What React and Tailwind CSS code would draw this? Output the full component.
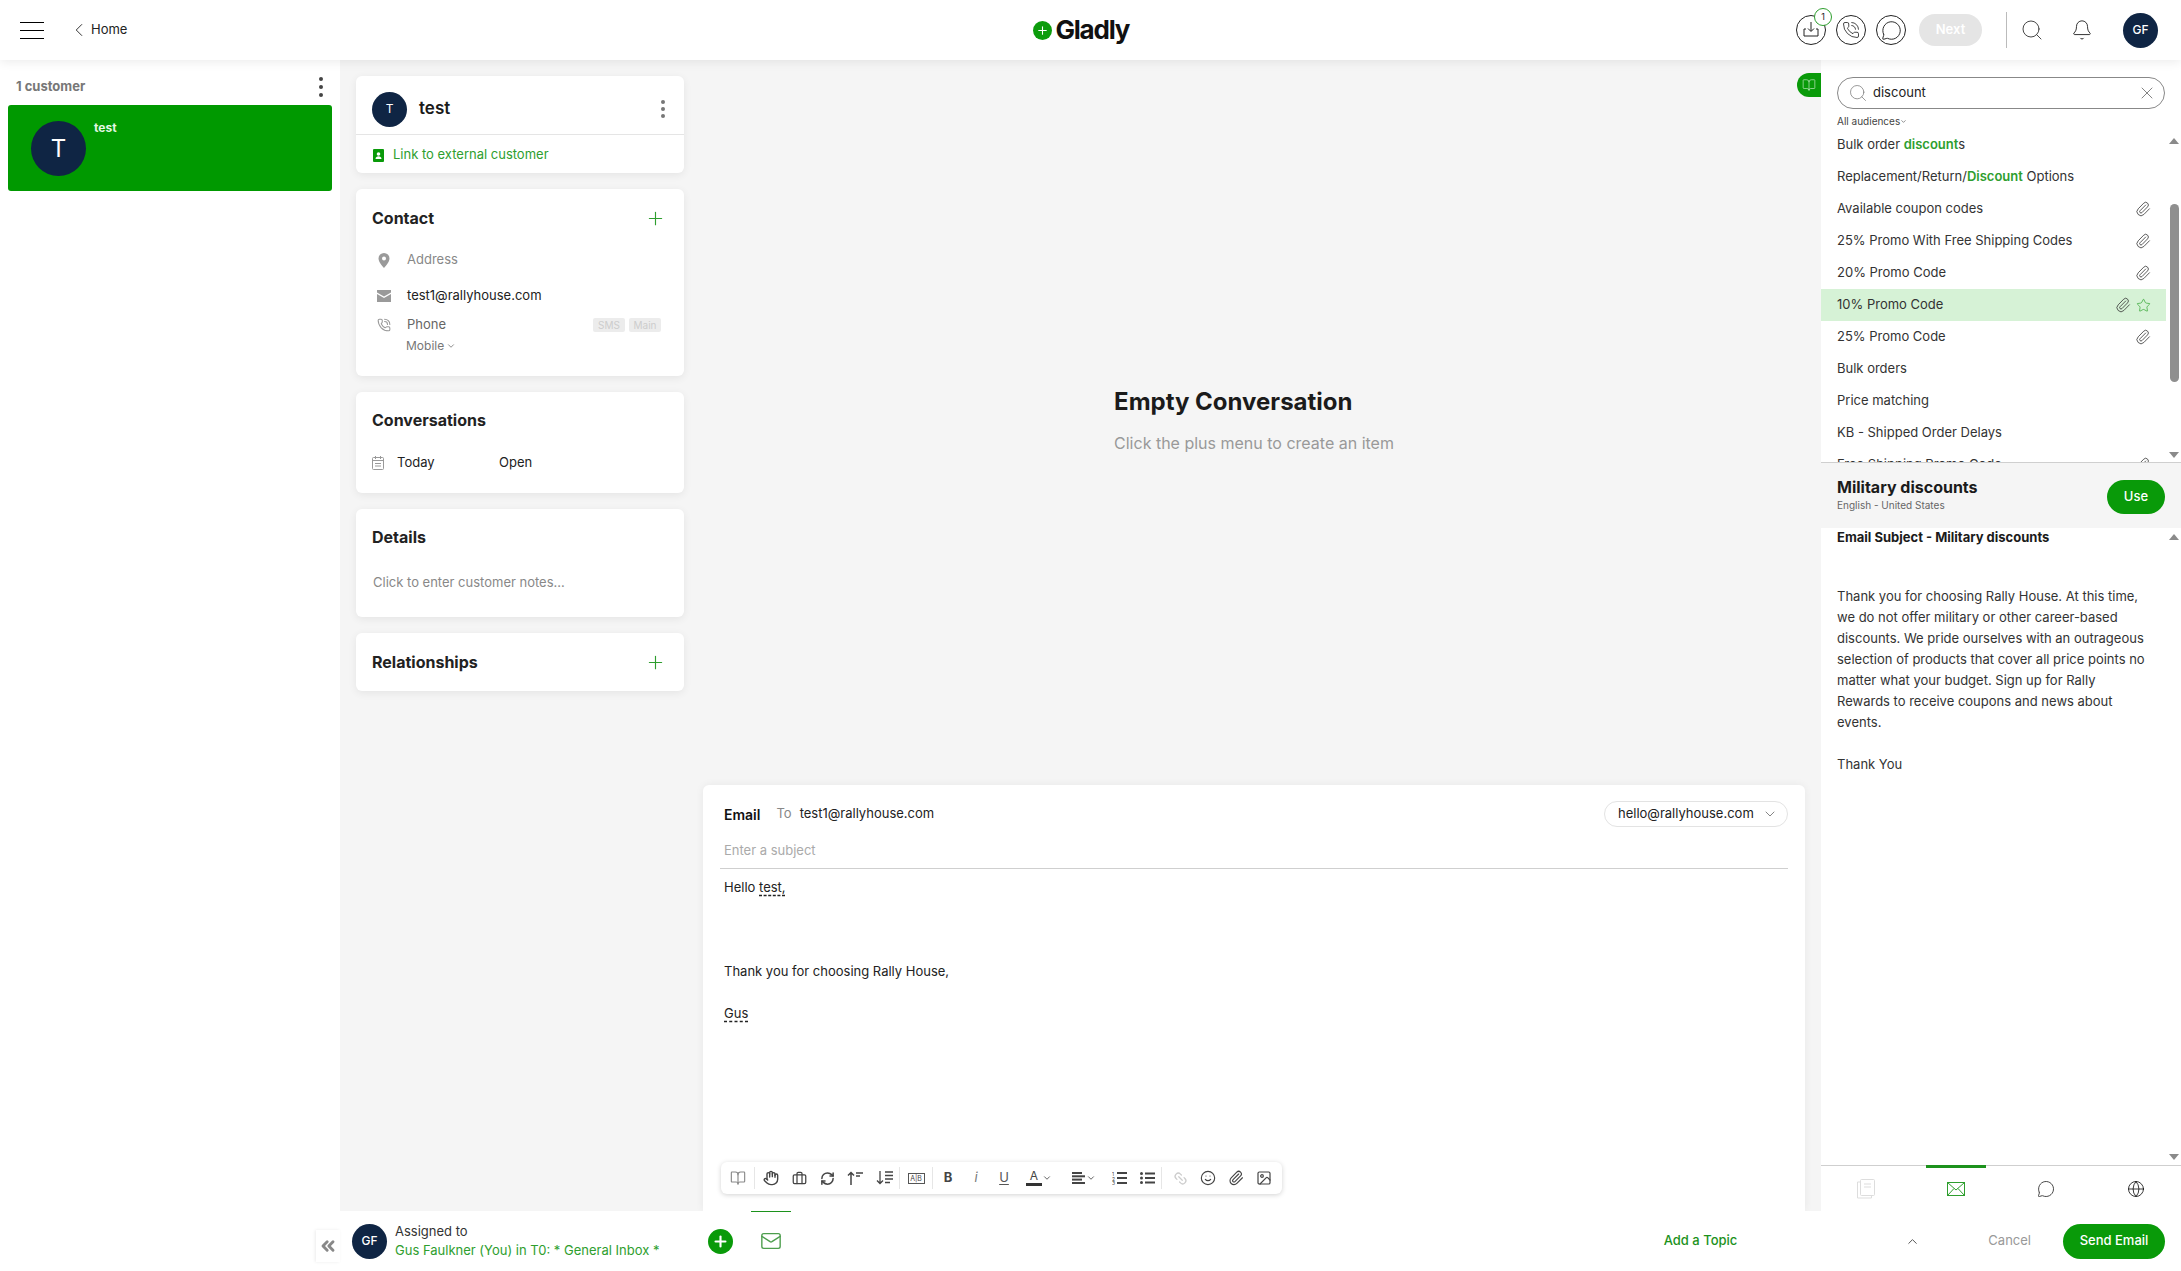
import React from "react";
import {
  Bell,
  BookOpen,
  Briefcase,
  ChevronDown,
  ChevronLeft,
  ChevronUp,
  ChevronsLeft,
  Globe,
  Hand,
  ImageIcon,
  Link2,
  Mail,
  MessageCircle,
  Paperclip,
  PhoneCall,
  Plus,
  RefreshCw,
  Search,
  Smile,
  Star,
  X,
} from "lucide-react";

const articles = [
  { title: <>Bulk order <b className="font-semibold text-[#2e9e2e]">discount</b>s</> },
  { title: <>Replacement/Return/<b className="font-semibold text-[#2e9e2e]">Discount</b> Options</> },
  { title: "Available coupon codes", clip: true },
  { title: "25% Promo With Free Shipping Codes", clip: true },
  { title: "20% Promo Code", clip: true },
  { title: "10% Promo Code", clip: true, active: true },
  { title: "25% Promo Code", clip: true },
  { title: "Bulk orders" },
  { title: "Price matching" },
  { title: "KB - Shipped Order Delays" },
  { title: "Free Shipping Promo Code", clip: true },
];

function Avatar({ text, className }) {
  return (
    <div className={`flex shrink-0 items-center justify-center rounded-full bg-[#0f2544] text-white ${className}`}>
      {text}
    </div>
  );
}

function Dots({ className }) {
  return (
    <div className={`flex flex-col items-center ${className}`}>
      <span className="size-[4px] rounded-full bg-current" />
      <span className="size-[4px] rounded-full bg-current" />
      <span className="size-[4px] rounded-full bg-current" />
    </div>
  );
}

function Card({ className, children }) {
  return <div className={`rounded-[6px] bg-white shadow-[0_2px_8px_rgba(0,0,0,0.07)] ${className}`}>{children}</div>;
}

function CircleButton({ children }) {
  return (
    <div className="flex size-[30px] items-center justify-center rounded-full border border-[#222] text-[#222]">
      {children}
    </div>
  );
}

function ScrollArrow({ up }) {
  return (
    <div className={`h-0 w-0 border-x-[5px] border-x-transparent ${up ? "border-b-[6px] border-b-[#8a8a8a]" : "border-t-[6px] border-t-[#8a8a8a]"}`} />
  );
}

function ToolButton({ className = "", children }) {
  return <div className={`flex h-full w-[28px] shrink-0 items-center justify-center text-[#444] ${className}`}>{children}</div>;
}

function ToolSep() {
  return <div className="h-[22px] w-px shrink-0 bg-[#e6e6e6]" />;
}

function Toolbar() {
  const ico = { size: 16, strokeWidth: 1.7 };
  return (
    <div className="flex h-[32px] w-[561px] items-center rounded-[6px] bg-white shadow-[0_1px_5px_rgba(0,0,0,0.18)]">
      <ToolButton className="w-[33px] text-[#888]"><BookOpen {...ico} /></ToolButton>
      <ToolSep />
      <ToolButton className="ml-[2px]"><Hand size={16} strokeWidth={2.1} /></ToolButton>
      <ToolButton><Briefcase size={15} strokeWidth={2} /></ToolButton>
      <ToolButton><RefreshCw size={15} strokeWidth={2.4} /></ToolButton>
      <ToolButton className="w-[29px]">
        <svg width="17" height="14" viewBox="0 0 17 14" fill="none" stroke="currentColor" strokeWidth="1.5">
          <path d="M4 14V1.500M1 4.500l3-3 3 3M9 2h7M9 5h4" />
        </svg>
      </ToolButton>
      <ToolButton className="w-[29px]">
        <svg width="17" height="14" viewBox="0 0 17 14" fill="none" stroke="currentColor" strokeWidth="1.3">
          <path d="M4 0v12.500M1 9.500l3 3 3-3M9 1h8M9 4.500h8M9 8h8M9 11.500h5" />
        </svg>
      </ToolButton>
      <ToolSep />
      <ToolButton className="w-[32px]">
        <span className="flex h-[11px] w-[17px] items-center justify-center border border-[#555] text-[7px] leading-none">A|B</span>
      </ToolButton>
      <ToolSep />
      <ToolButton className="ml-[1px]"><span className="text-[13px] font-bold">B</span></ToolButton>
      <ToolButton><span className="text-[13px] italic text-[#777]">i</span></ToolButton>
      <ToolButton><span className="text-[13px] text-[#555] underline underline-offset-2">U</span></ToolButton>
      <ToolButton className="w-[42px]">
        <span className="flex flex-col items-center text-[12px] leading-[12px]">
          A
          <span className="mt-[1px] h-[3px] w-[16px] bg-[#333]" />
        </span>
        <ChevronDown size={10} />
      </ToolButton>
      <ToolButton className="ml-[3px] w-[42px]">
        <svg width="14" height="12" viewBox="0 0 14 12" fill="currentColor">
          <rect width="10" height="2" />
          <rect y="3.3" width="13" height="2" />
          <rect y="6.6" width="10" height="2" />
          <rect y="10" width="13" height="2" />
        </svg>
        <ChevronDown size={10} />
      </ToolButton>
      <ToolButton>
        <svg width="15" height="14" viewBox="0 0 15 14" fill="currentColor">
          <text x="0" y="4.5" fontSize="5">1</text>
          <text x="0" y="9.5" fontSize="5">2</text>
          <text x="0" y="14" fontSize="5">3</text>
          <rect x="5" y="1" width="10" height="2" />
          <rect x="5" y="6" width="10" height="2" />
          <rect x="5" y="11" width="10" height="2" />
        </svg>
      </ToolButton>
      <ToolButton>
        <svg width="15" height="12" viewBox="0 0 15 12" fill="currentColor">
          <circle cx="1.5" cy="1.5" r="1.5" />
          <circle cx="1.5" cy="6" r="1.5" />
          <circle cx="1.5" cy="10.5" r="1.5" />
          <rect x="5" y="0.5" width="10" height="2" />
          <rect x="5" y="5" width="10" height="2" />
          <rect x="5" y="9.5" width="10" height="2" />
        </svg>
      </ToolButton>
      <ToolSep />
      <ToolButton className="ml-[4px] text-[#ccc]"><Link2 size={15} strokeWidth={2} className="rotate-45" /></ToolButton>
      <ToolButton><Smile {...ico} /></ToolButton>
      <ToolButton><Paperclip {...ico} /></ToolButton>
      <ToolButton>
        <ImageIcon size={16} strokeWidth={1.8} />
      </ToolButton>
    </div>
  );
}

function CustomerColumn() {
  return (
    <div className="flex w-[363px] shrink-0 flex-col gap-[16px] pl-[16px] pr-[19px] pt-[16px]">
      <Card className="h-[97px]">
        <div className="flex h-[59px] items-center border-b border-[#e5e5e5] px-[16px] pt-[8px]">
          <Avatar text="T" className="size-[35px] text-[12px]" />
          <span className="ml-[12px] text-[17px] font-semibold text-[#1b1b1b]">test</span>
          <Dots className="ml-auto mr-[3px] gap-[3px] text-[#777]" />
        </div>
        <div className="flex h-[38px] items-center px-[17px] pt-[2px] text-[13px] text-[#2e9e2e]">
          <svg width="12" height="13" viewBox="0 0 12 13" fill="#099a09">
            <path d="M1 0h9a1 1 0 0 1 1 1v11a1 1 0 0 1-1 1H1a1 1 0 0 1-1-1V1a1 1 0 0 1 1-1z" />
            <circle cx="5.500" cy="5" r="1.800" fill="#fff" />
            <path d="M2.500 10c0-2 1.500-2.800 3-2.800s3 .8 3 2.800z" fill="#fff" />
          </svg>
          <span className="ml-[8px]">Link to external customer</span>
        </div>
      </Card>

      <Card className="h-[187px] px-[16px] pt-[19px]">
        <div className="flex h-[20px] items-center justify-between">
          <span className="text-[16px] font-bold text-[#222]">Contact</span>
          <Plus size={21} strokeWidth={1.3} className="mr-[2px] text-[#2e9e2e]" />
        </div>
        <div className="mt-[22px] flex h-[20px] items-center text-[13px] text-[#888]">
          <svg width="35" height="15" viewBox="0 0 35 15" fill="#9a9a9a">
            <path d="M12 0a5.500 5.500 0 0 0-5.500 5.500C6.500 9.500 12 15 12 15s5.500-5.500 5.500-9.500A5.500 5.500 0 0 0 12 0zm0 7.500a2 2 0 1 1 0-4 2 2 0 0 1 0 4z" />
          </svg>
          Address
        </div>
        <div className="mt-[16px] flex h-[20px] items-center text-[13px] text-[#222]">
          <svg width="35" height="12" viewBox="0 0 35 12" fill="#9a9a9a">
            <path d="M5 0h14v2.500l-7 4-7-4z" />
            <path d="M5 4l7 4 7-4v8H5z" />
          </svg>
          test1@rallyhouse.com
        </div>
        <div className="mt-[9px] flex h-[20px] items-center text-[13px] text-[#666]">
          <PhoneCall size={14} strokeWidth={1.8} className="ml-[5px] mr-[16px] text-[#999]" />
          Phone
          <span className="ml-auto flex h-[14px] w-[32px] items-center justify-center rounded-[2px] bg-[#ececec] text-[10px] text-[#ccc]">SMS</span>
          <span className="ml-[4px] mr-[7px] flex h-[14px] w-[32px] items-center justify-center rounded-[2px] bg-[#ececec] text-[10px] text-[#ccc]">Main</span>
        </div>
        <div className="ml-[34px] mt-[2px] flex items-center gap-[2px] text-[12px] leading-[18px] text-[#777]">
          Mobile <ChevronDown size={10} />
        </div>
      </Card>

      <Card className="h-[101px] px-[16px] pt-[18px]">
        <div className="text-[16px] font-bold leading-[20px] text-[#222]">Conversations</div>
        <div className="mt-[23px] flex h-[20px] items-center text-[13px] text-[#222]">
          <svg width="25" height="14" viewBox="0 0 25 14" fill="none" stroke="#999">
            <rect x="0.500" y="1.500" width="11" height="12" rx="1" />
            <path d="M0.500 4.500h11M3.500 0v3M8.500 0v3M3 7.500h6M3 10h6" />
          </svg>
          <span className="w-[102px]">Today</span>
          Open
        </div>
      </Card>

      <Card className="h-[108px] px-[16px] pt-[18px]">
        <div className="text-[16px] font-bold leading-[20px] text-[#222]">Details</div>
        <div className="ml-[1px] mt-[25px] text-[13px] leading-[20px] text-[#888]">Click to enter customer notes...</div>
      </Card>

      <Card className="flex h-[58px] items-center justify-between px-[16px]">
        <span className="text-[16px] font-bold text-[#222]">Relationships</span>
        <Plus size={21} strokeWidth={1.3} className="mr-[2px] text-[#2e9e2e]" />
      </Card>
    </div>
  );
}

function Compose() {
  return (
    <div className="flex h-[426px] flex-col rounded-t-[6px] bg-white pb-[17px] shadow-[0_0_8px_rgba(0,0,0,0.06)]">
      <div className="flex items-center pl-[21px] pr-[20px] pt-[16px] text-[13px]">
        <span className="text-[14px] font-semibold text-[#111]">Email</span>
        <span className="ml-[16px] text-[#888]">To</span>
        <span className="ml-[8px] text-[#222]">test1@rallyhouse.com</span>
        <span className="ml-auto mr-[-3px] flex h-[26px] w-[184px] items-center justify-between rounded-full border border-[#e3e3e3] pl-[13px] pr-[9px] text-[#222]">
          hello@rallyhouse.com <ChevronDown size={16} strokeWidth={1.2} className="text-[#666]" />
        </span>
      </div>
      <div className="mx-[17px] mt-[14px] border-b border-[#cfcfcf] pb-[9px] pl-[4px] pr-[3px] text-[13px] leading-[18px] text-[#aaa]">
        Enter a subject
      </div>
      <div className="mt-[8px] pl-[21px] pr-[20px] text-[13px] leading-[21px] text-[#222]">
        <p>Hello <span className="underline decoration-dashed underline-offset-[3px]">test,</span></p>
        <p className="mt-[63px]">Thank you for choosing Rally House,</p>
        <p className="mt-[21px]"><span className="underline decoration-dashed underline-offset-[3px]">Gus</span></p>
      </div>
      <div className="mt-auto pl-[18px]">
        <Toolbar />
      </div>
    </div>
  );
}

function ArticlePanel() {
  return (
    <div className="flex w-[360px] shrink-0 flex-col bg-white">
      <div className="px-[16px] pt-[17px]">
        <div className="flex h-[32px] items-center rounded-full border border-[#888] pl-[10px] pr-[7px] text-[13px] text-[#222]">
          <Search size={20} strokeWidth={0.9} className="text-[#777]" />
          <span className="ml-[5px]">discount</span>
          <X size={20} strokeWidth={0.8} className="ml-auto text-[#444]" />
        </div>
        <div className="mt-[5px] flex h-[14px] items-center text-[10px] text-[#444]">
          All audiences<ChevronDown size={7} />
        </div>
      </div>
      <div className="mt-[4px] flex h-[331px] border-b border-[#cfcfcf]">
        <div className="w-[345px] overflow-hidden">
          {articles.map((a, i) => (
            <div
              key={i}
              className={`flex h-[32px] items-center pl-[16px] pr-[15px] text-[13px] text-[#333] first:mt-[-3px] ${a.active ? "bg-[#d6f2d6]" : ""}`}
            >
              <span>{a.title}</span>
              {a.clip && <Paperclip size={16} strokeWidth={1.2} className="ml-auto" />}
              {a.active && <Star size={15} strokeWidth={1} className="ml-[5px] text-[#1a9a1a]" />}
            </div>
          ))}
        </div>
        <div className="flex w-[15px] flex-col items-center justify-between pb-[4px] pl-[1px] pt-[6px]">
          <ScrollArrow up />
          <div className="mb-auto mt-[60px] h-[178px] w-[9px] rounded-full bg-[#8f8f8f]" />
          <ScrollArrow />
        </div>
      </div>
      <div className="flex h-[65px] items-center bg-[#f5f5f5] pl-[16px] pr-[16px]">
        <div className="mb-[4px]">
          <div className="text-[16px] font-bold leading-[22px] text-[#1b1b1b]">Military discounts</div>
          <div className="text-[10px] leading-[14px] text-[#666]">English - United States</div>
        </div>
        <div className="ml-auto mt-[2px] flex h-[34px] w-[58px] items-center justify-center rounded-full bg-[#099a09] text-[13px] font-medium text-white">Use</div>
      </div>
      <div className="flex flex-1">
        <div className="w-[345px] pl-[16px] text-[13px] leading-[21px] text-[#333]">
          <p className="font-bold leading-[18px] text-[#1b1b1b]">Email Subject - Military discounts</p>
          <p className="mt-[40px] w-[312px]">
            Thank you for choosing Rally House. At this time, we do not offer military or other career-based discounts. We pride ourselves with an outrageous selection of products that cover all price points no matter what your budget. Sign up for Rally Rewards to receive coupons and news about events.
          </p>
          <p className="mt-[21px]">Thank You</p>
        </div>
        <div className="flex w-[15px] flex-col items-center justify-between pb-[5px] pl-[1px] pt-[6px]">
          <ScrollArrow up />
          <ScrollArrow />
        </div>
      </div>
      <div className="grid h-[46px] grid-cols-4 border-t border-[#cfcfcf]">
        <div className="flex items-center justify-center text-[#ddd]">
          <svg width="18" height="20" viewBox="0 0 18 20" fill="none" stroke="currentColor">
            <rect x="3.500" y="0.500" width="14" height="16" rx="1" />
            <path d="M3.500 3h-3v16h14v-2.500M7 5h7M7 8h7" />
          </svg>
        </div>
        <div className="relative flex items-center justify-center text-[#2e9e2e]">
          <span className="absolute left-[15px] top-[-1px] h-[3px] w-[60px] bg-[#1c921c]" />
          <svg width="18" height="14" viewBox="0 0 18 14" fill="none" stroke="currentColor">
            <rect x="0.500" y="0.500" width="17" height="13" />
            <path d="M0.500 0.500l8.500 7.500 8.500-7.500M0.500 13.500l6.500-7M17.500 13.500l-6.500-7" />
          </svg>
        </div>
        <div className="flex items-center justify-center text-[#222]"><MessageCircle size={18} strokeWidth={1.1} /></div>
        <div className="flex items-center justify-center text-[#111]"><Globe size={18} strokeWidth={1.1} /></div>
      </div>
    </div>
  );
}

export default function App() {
  return (
    <div className="flex h-screen flex-col overflow-hidden bg-white font-['Inter',sans-serif]">
      <header className="relative z-10 flex h-[60px] shrink-0 items-center bg-white pl-[20px] pr-[23px] shadow-[0_2px_10px_rgba(0,0,0,0.08)]">
        <div className="flex w-[24px] flex-col gap-[7px]">
          <span className="h-px bg-black" />
          <span className="h-px bg-black" />
          <span className="h-px bg-black" />
        </div>
        <ChevronLeft size={22} strokeWidth={1} className="ml-[24px] text-[#222]" />
        <span className="ml-[1px] text-[13px] text-[#222]">Home</span>
        <div className="ml-[906px] flex items-center">
          <div className="flex size-[19px] items-center justify-center rounded-full bg-[#0c9c0c]">
            <Plus size={13} strokeWidth={2} className="text-white" />
          </div>
          <span className="ml-[3px] text-[26px] font-bold leading-none tracking-[-1.2px] text-[#111]">Gladly</span>
        </div>
        <div className="ml-auto flex items-center">
          <div className="relative">
            <CircleButton>
              <svg width="18" height="18" viewBox="0 0 18 18" fill="none" stroke="currentColor">
                <path d="M9 1v9M6 7.500l3 3 3-3M4 8H2v7h14V8h-2" />
              </svg>
            </CircleButton>
            <span className="absolute right-[-6px] top-[-7px] flex size-[18px] items-center justify-center rounded-full border border-[#2e9e2e] bg-white text-[9px] text-[#222]">1</span>
          </div>
          <div className="ml-[10px]"><CircleButton><PhoneCall size={18} strokeWidth={1.1} /></CircleButton></div>
          <div className="ml-[10px]"><CircleButton><MessageCircle size={21} strokeWidth={1.1} /></CircleButton></div>
          <div className="ml-[13px] flex h-[32px] w-[63px] items-center justify-center rounded-full bg-[#e5e5e5] text-[13px] font-semibold text-white">Next</div>
          <div className="ml-[24px] h-[36px] w-px bg-[#bbb]" />
          <Search size={24} strokeWidth={0.9} className="ml-[13px] text-[#333]" />
          <Bell size={22} strokeWidth={1} className="ml-[27px] text-[#222]" />
          <Avatar text="GF" className="ml-[30px] size-[35px] text-[12px] font-medium" />
        </div>
      </header>

      <div className="flex min-h-0 flex-1">
        <aside className="w-[340px] shrink-0 bg-white px-[8px]">
          <div className="flex h-[45px] items-center justify-between pl-[8px] pr-[9px] pt-[8px]">
            <span className="text-[13px] font-bold text-[#777]">1 customer</span>
            <Dots className="gap-[4px] text-[#444]" />
          </div>
          <div className="flex h-[86px] rounded-[3px] bg-[#009900] pl-[23px] pt-[16px]">
            <Avatar text="T" className="size-[55px] text-[24px]" />
            <span className="ml-[8px] mt-[-1px] text-[12px] font-bold leading-[16px] text-[#e4f7e4]">test</span>
          </div>
        </aside>

        <div className="flex min-w-0 flex-1 flex-col">
          <div className="flex min-h-0 flex-1 bg-[#f5f5f5]">
            <CustomerColumn />
            <main className="relative flex min-w-0 flex-1 flex-col pr-[16px]">
              <div className="flex flex-1 items-center justify-center pb-[5px]">
                <div>
                  <div className="text-[24px] font-bold leading-[30px] text-[#1b1b1b]">Empty Conversation</div>
                  <div className="mt-[15px] text-[16px] leading-[22px] text-[#999]">Click the plus menu to create an item</div>
                </div>
              </div>
              <Compose />
              <div className="absolute right-0 top-[13px] flex h-[24px] w-[24px] items-center justify-center rounded-l-full bg-[#099a09] text-[#bfe8bf]">
                <BookOpen size={14} strokeWidth={1.2} />
              </div>
            </main>
            <ArticlePanel />
          </div>

          <footer className="relative flex h-[60px] shrink-0 items-center bg-white pl-[12px] pr-[16px]">
            <div className="absolute left-[-24px] top-[19px] flex h-[32px] w-[24px] items-center justify-center bg-white text-[#888] shadow-[-1px_0_3px_rgba(0,0,0,0.08)]">
              <ChevronsLeft size={20} strokeWidth={3.5} />
            </div>
            <Avatar text="GF" className="size-[35px] text-[12px] font-medium" />
            <div className="ml-[8px] w-[313px] text-[13px] leading-[19px]">
              <div className="text-[#333]">Assigned to</div>
              <div className="text-[#2e9e2e]">Gus Faulkner (You) in T0: * General Inbox *</div>
            </div>
            <div className="flex size-[25px] items-center justify-center rounded-full bg-[#099a09]">
              <Plus size={17} strokeWidth={3} className="text-white" />
            </div>
            <div className="relative ml-[18px] flex h-[60px] w-[40px] items-center justify-center text-[#4d9e4d]">
              <span className="absolute left-0 right-0 top-0 h-px bg-[#1c921c]" />
              <Mail size={22} strokeWidth={1.5} />
            </div>
            <span className="ml-auto text-[13px] font-medium text-[#1c921c]">Add a Topic</span>
            <ChevronUp size={15} strokeWidth={1.6} className="ml-[168px] text-[#555]" />
            <span className="ml-[68px] text-[13px] text-[#999]">Cancel</span>
            <div className="ml-[32px] flex h-[35px] w-[102px] items-center justify-center rounded-full bg-[#099a09] text-[13px] font-medium text-white">Send Email</div>
          </footer>
        </div>
      </div>
    </div>
  );
}
